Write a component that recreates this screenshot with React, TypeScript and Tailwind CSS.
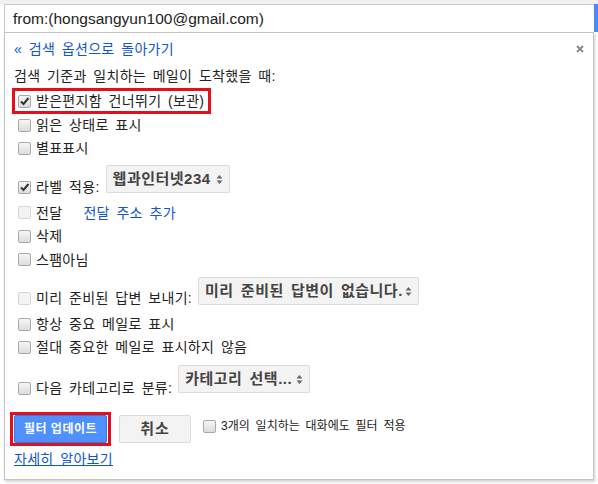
import React from 'react';

const font = "font-['Liberation_Sans','Noto_Sans_CJK_KR',sans-serif]";

interface CheckProps {
  checked?: boolean;
  disabled?: boolean;
}

const Check: React.FC<CheckProps> = ({ checked = false, disabled = false }) => (
  <span
    className={`relative inline-block w-[13px] h-[13px] shrink-0 rounded-[2px] border ${
      disabled
        ? 'border-[#d6d6d6] bg-[#f3f3f3]'
        : 'border-[#a8a8a8] bg-gradient-to-b from-[#f6f6f6] to-[#dcdcdc]'
    }`}
  >
    {checked && (
      <svg viewBox="0 0 11 11" className="absolute left-0 top-0 w-[11px] h-[11px]">
        <path d="M2 5.5 L4.5 8 L9.5 2" fill="none" stroke="#333" strokeWidth="2" />
      </svg>
    )}
  </span>
);

const Arrows: React.FC = () => (
  <svg viewBox="0 0 7 11" className="w-[7px] h-[11px] shrink-0">
    <path d="M0.5 4.5 L3.5 1 L6.5 4.5 Z" fill="#666" />
    <path d="M0.5 6.5 L3.5 10 L6.5 6.5 Z" fill="#666" />
  </svg>
);

interface SelectProps {
  label: string;
  width: string;
}

const FakeSelect: React.FC<SelectProps> = ({ label, width }) => (
  <div
    className={`${width} h-[28px] flex items-center justify-between pl-[6px] pr-[6px] border border-[#dcdcdc] rounded-[2px] bg-[#f3f3f3] text-[15px] tracking-[0.5px] font-bold text-[#444] whitespace-nowrap`}
  >
    <span>{label}</span>
    <Arrows />
  </div>
);

interface RowProps {
  label: string;
  checked?: boolean;
  disabled?: boolean;
  h: string;
  children?: React.ReactNode;
}

const Row: React.FC<RowProps> = ({ label, checked, disabled, h, children }) => (
  <div className={`${h} flex items-center pl-[13px] gap-[5px]`}>
    <Check checked={checked} disabled={disabled} />
    <span>{label}</span>
    {children}
  </div>
);

export default function App() {
  return (
    <div className={`w-[598px] h-[484px] bg-white overflow-hidden text-[#222] ${font}`}>
      <div className="h-[4px] bg-[#f1f1f1]" />
      <div className="flex h-[28px]">
        <div className="ml-[4px] flex-1 border-t border-l border-[#c8c8c8] flex items-center pl-[8px] text-[15.5px] text-[#222]">
          from:(hongsangyun100@gmail.com)
        </div>
        <div className="w-[4px] bg-[#4a8af4]" />
      </div>

      <div className="ml-[4px] w-[590px] h-[448px] border border-[#c4c4c4] bg-white shadow-[1px_2px_3px_rgba(0,0,0,0.18)] text-[14px] leading-[16px] tracking-[0.3px] [word-spacing:2.5px]">
        <div className="mt-[6px] h-[20px] flex items-center justify-between pl-[9px] pr-[9px]">
          <span className="text-[#1155cc]">« 검색 옵션으로 돌아가기</span>
          <svg viewBox="0 0 8 8" className="w-[8px] h-[8px]">
            <path d="M1 1 L7 7 M7 1 L1 7" stroke="#8a8a8a" strokeWidth="2" />
          </svg>
        </div>

        <div className="mt-[5px] h-[24px] flex items-center pl-[9px]">
          검색 기준과 일치하는 메일이 도착했을 때:
        </div>

        <div className="ml-[7px] w-[199px] h-[26px] border-[3px] border-[#e3101c] flex items-center pl-[3px] gap-[5px] whitespace-nowrap">
          <Check checked />
          <span>받은편지함 건너뛰기 (보관)</span>
        </div>

        <Row label="읽은 상태로 표시" h="h-[22px]" />
        <Row label="별표표시" h="h-[24px]" />

        <div className="h-[40px] flex items-start pl-[13px]">
          <div className="mt-[19px] flex items-center gap-[5px]">
            <Check checked />
            <span>라벨 적용:</span>
          </div>
          <div className="mt-[5px] ml-[6px]">
            <FakeSelect label="웹과인터넷234" width="w-[124px]" />
          </div>
        </div>

        <div className="h-[25px] flex items-center pl-[13px] gap-[5px]">
          <Check disabled />
          <span>전달</span>
          <span className="ml-[16px] text-[#1155cc]">전달 주소 추가</span>
        </div>

        <Row label="삭제" h="h-[22px]" />
        <Row label="스팸아님" h="h-[25px]" />

        <div className="h-[40px] flex items-start pl-[13px]">
          <div className="mt-[18px] flex items-center gap-[5px]">
            <Check disabled />
            <span>미리 준비된 답변 보내기:</span>
          </div>
          <div className="mt-[5px] ml-[6px]">
            <FakeSelect label="미리 준비된 답변이 없습니다." width="w-[221px]" />
          </div>
        </div>

        <Row label="항상 중요 메일로 표시" h="h-[24px]" />
        <Row label="절대 중요한 메일로 표시하지 않음" h="h-[22px]" />

        <div className="h-[42px] flex items-start pl-[13px]">
          <div className="mt-[22px] flex items-center gap-[5px]">
            <Check />
            <span>다음 카테고리로 분류:</span>
          </div>
          <div className="mt-[7px] ml-[6px]">
            <FakeSelect label="카테고리 선택..." width="w-[132px]" />
          </div>
        </div>

        <div className="mt-[12px] h-[34px] flex items-center pl-[5px]">
          <div className="w-[101px] h-[34px] border-[3px] border-[#e3101c] px-[1px]">
            <button className="w-full h-full rounded-[2px] border border-[#3079ed] bg-[#4d90fe] text-white text-[12px] tracking-[0.5px] font-bold">
              필터 업데이트
            </button>
          </div>
          <button className="ml-[8px] w-[72px] h-[28px] rounded-[2px] border border-[#dcdcdc] bg-[#f3f3f3] text-[#444] text-[15px] tracking-[1px] font-bold">
            취소
          </button>
          <div className="ml-[12px] self-start mt-[6px] flex items-center gap-[5px] text-[12px] tracking-normal">
            <Check />
            <span>3개의 일치하는 대화에도 필터 적용</span>
          </div>
        </div>

        <div className="mt-[5px] pl-[9px] leading-[16px]">
          <span className="text-[#1155cc] underline">자세히 알아보기</span>
        </div>
      </div>
    </div>
  );
}
